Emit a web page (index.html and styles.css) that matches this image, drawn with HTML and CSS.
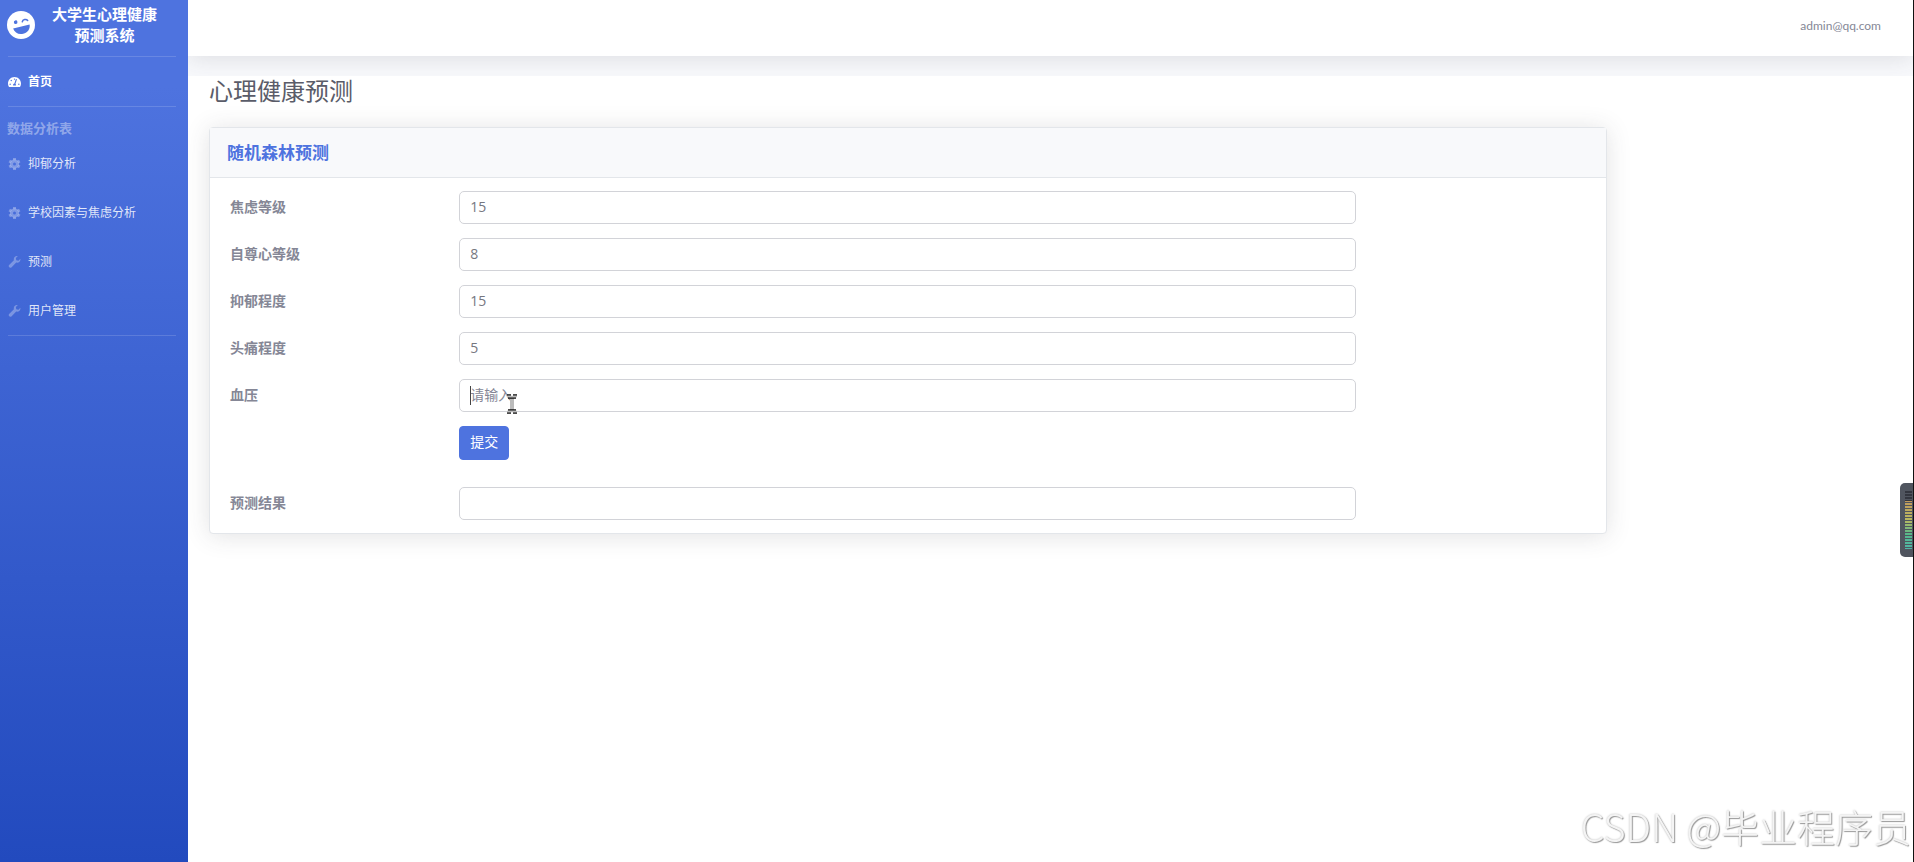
FILE: index.html
```
<!DOCTYPE html>
<html lang="zh-CN">
<head>
    <meta charset="UTF-8">
    <meta name="viewport" content="width=device-width, initial-scale=1.0">
    <title>大学生心理健康预测系统</title>
    <link rel="stylesheet" href="styles.css">
</head>
<body>
    <div class="wrapper">
        <!-- Sidebar -->
        <nav class="sidebar">
            <a class="brand" href="#">
                <svg class="brand-icon" viewBox="0 0 28 28" aria-hidden="true">
                    <circle cx="14" cy="14" r="14" fill="#fff"/>
                    <g transform="rotate(-14 14 14)">
                        <path d="M5.500 15.500h17c-.4 4.500-3.800 7.500-8.500 7.500s-8.100-3-8.500-7.500z" fill="#4e73df"/>
                        <circle cx="9.500" cy="10" r="1.800" fill="#4e73df"/>
                        <path d="M16 11.200c1-2.200 4.600-2.200 5.600 0" fill="none" stroke="#4e73df" stroke-width="1.500" stroke-linecap="round"/>
                    </g>
                </svg>
                <span class="brand-text">大学生心理健康<br>预测系统</span>
            </a>
            <hr class="divider">
            <a class="nav-link active" href="#">
                <svg class="nav-icon" viewBox="0 0 576 512" aria-hidden="true">
                    <path fill="currentColor" d="M288 32C128.940 32 0 160.940 0 320c0 52.800 14.250 102.260 39.060 144.800 5.610 9.620 16.300 15.200 27.440 15.200h443c11.140 0 21.830-5.580 27.440-15.200C561.750 422.260 576 372.800 576 320c0-159.060-128.940-288-288-288zm0 64c14.710 0 26.580 10.130 30.320 23.650-1.110 2.260-2.640 4.230-3.450 6.670l-9.220 27.670c-5.130 3.490-10.970 6.010-17.640 6.010-17.670 0-32-14.330-32-32S270.330 96 288 96zM96 384c-17.670 0-32-14.330-32-32s14.330-32 32-32 32 14.330 32 32-14.330 32-32 32zm48-160c-17.670 0-32-14.330-32-32s14.330-32 32-32 32 14.330 32 32-14.330 32-32 32zm246.770-72.410l-61.330 184C343.130 347.330 352 364.540 352 384c0 11.720-3.380 22.550-8.880 32H232.880c-5.500-9.450-8.880-20.280-8.880-32 0-33.940 26.500-61.430 59.900-63.590l61.340-184.010c4.170-12.560 17.730-19.450 30.360-15.170 12.570 4.190 19.350 17.790 15.170 30.360zM480 384c-17.670 0-32-14.330-32-32s14.330-32 32-32 32 14.330 32 32-14.330 32-32 32z"/>
                </svg>
                <span>首页</span>
            </a>
            <hr class="divider">
            <div class="nav-heading">数据分析表</div>
            <a class="nav-link" href="#">
                <svg class="nav-icon" viewBox="0 0 16 16" aria-hidden="true">
                    <circle cx="8" cy="8" r="4" fill="none" stroke="currentColor" stroke-width="4"/>
                    <path d="M8 0v3M8 13v3M1 4l2.600 1.500M12.400 10.500L15 12M1 12l2.600-1.500M12.400 5.500L15 4" stroke="currentColor" stroke-width="4"/>
                </svg>
                <span>抑郁分析</span>
            </a>
            <a class="nav-link" href="#">
                <svg class="nav-icon" viewBox="0 0 16 16" aria-hidden="true">
                    <circle cx="8" cy="8" r="4" fill="none" stroke="currentColor" stroke-width="4"/>
                    <path d="M8 0v3M8 13v3M1 4l2.600 1.500M12.400 10.500L15 12M1 12l2.600-1.500M12.400 5.500L15 4" stroke="currentColor" stroke-width="4"/>
                </svg>
                <span>学校因素与焦虑分析</span>
            </a>
            <a class="nav-link" href="#">
                <svg class="nav-icon" viewBox="0 0 16 16" aria-hidden="true">
                    <path fill="currentColor" d="M15.800 3.700l-2.500 2.500-2.900-.6-.6-2.900L12.300.2C9 -.6 6.300 2.400 7.200 5.700L.8 12.100c-1.800 2 1.100 4.900 3.100 3.100l6.400-6.400c3.300.9 6.300-1.800 5.500-5.100z"/>
                </svg>
                <span>预测</span>
            </a>
            <a class="nav-link" href="#">
                <svg class="nav-icon" viewBox="0 0 16 16" aria-hidden="true">
                    <path fill="currentColor" d="M15.800 3.700l-2.500 2.500-2.900-.6-.6-2.900L12.300.2C9 -.6 6.300 2.400 7.200 5.700L.8 12.100c-1.800 2 1.100 4.900 3.100 3.100l6.400-6.400c3.300.9 6.300-1.800 5.500-5.100z"/>
                </svg>
                <span>用户管理</span>
            </a>
            <hr class="divider">
        </nav>

        <div class="content">
            <!-- Topbar -->
            <header class="topbar">
                <a class="user" href="#">admin@qq.com</a>
            </header>

            <main class="main">
                <h1>心理健康预测</h1>
                <div class="card">
                    <div class="card-header">
                        <h2>随机森林预测</h2>
                    </div>
                    <form class="card-body">
                        <div class="form-row">
                            <label for="anxiety">焦虑等级</label>
                            <div class="field"><input type="text" id="anxiety" value="15" placeholder="请输入"></div>
                        </div>
                        <div class="form-row">
                            <label for="esteem">自尊心等级</label>
                            <div class="field"><input type="text" id="esteem" value="8" placeholder="请输入"></div>
                        </div>
                        <div class="form-row">
                            <label for="depression">抑郁程度</label>
                            <div class="field"><input type="text" id="depression" value="15" placeholder="请输入"></div>
                        </div>
                        <div class="form-row">
                            <label for="headache">头痛程度</label>
                            <div class="field"><input type="text" id="headache" value="5" placeholder="请输入"></div>
                        </div>
                        <div class="form-row">
                            <label for="pressure">血压</label>
                            <div class="field">
                                <input type="text" id="pressure" placeholder="请输入">
                                <span class="caret"></span>
                                <svg class="pointer" viewBox="0 0 12 20" aria-hidden="true">
                                    <path d="M4 4h4v12H4z" fill="#bbb"/>
                                    <path d="M1 1h4M7 1h4M2 4h8M2 16h8M1 19h4M7 19h4" stroke="#111" stroke-width="1.500"/>
                                    <path d="M1 2.500h10M1 17.500h10" stroke="#bbb" stroke-width="1.500"/>
                                </svg>
                            </div>
                        </div>
                        <div class="form-row submit-row">
                            <div class="field"><button type="submit">提交</button></div>
                        </div>
                        <div class="form-row">
                            <label for="result">预测结果</label>
                            <div class="field"><input type="text" id="result"></div>
                        </div>
                    </form>
                </div>
            </main>
        </div>
    </div>

    <!-- Floating level meter -->
    <div class="meter"><div class="meter-bars"></div></div>

    <div class="watermark">CSDN @毕业程序员</div>
</body>
</html>
```
FILE: styles.css
```
* {
    box-sizing: border-box;
}

body {
    margin: 0;
    font-family: "Open Sans", "Noto Sans CJK SC", sans-serif;
    font-size: 14px;
    line-height: 21px;
    color: #858796;
    background-color: #fff;
}

a {
    text-decoration: none;
}

.wrapper {
    display: flex;
    min-height: 100vh;
    border-right: 1px solid #111;
}

/* Sidebar */
.sidebar {
    flex: 0 0 188px;
    background: linear-gradient(180deg, #4e73df 10%, #224abe 100%);
}

.brand {
    display: flex;
    align-items: center;
    height: 56px;
    padding: 0 7px 6px;
    color: #fff;
    font-size: 15px;
    font-weight: 700;
}

.brand-icon {
    width: 28px;
    height: 28px;
}

.brand-text {
    flex: 1;
    padding-right: 12px;
    padding-left: 5px;
    text-align: center;
}

.divider {
    height: 1px;
    margin: 0 12px 0 8px;
    border: 0;
    background-color: rgba(255, 255, 255, 0.15);
}

.nav-link {
    display: flex;
    align-items: center;
    gap: 7px;
    height: 49px;
    padding: 0 8px;
    color: rgba(255, 255, 255, 0.85);
    font-size: 12px;
}

.nav-icon {
    width: 13px;
    height: 12px;
    color: rgba(255, 255, 255, 0.3);
}

.nav-link.active {
    color: #fff;
    font-weight: 700;
}

.nav-link.active .nav-icon {
    color: #fff;
}

.nav-heading {
    padding: 11px 7px 0;
    color: rgba(255, 255, 255, 0.4);
    font-size: 13px;
    font-weight: 700;
}

/* Content */
.content {
    flex: 1;
    display: flex;
    flex-direction: column;
    min-width: 0;
    overflow: hidden;
    background-color: #f8f9fc;
}

.topbar {
    display: flex;
    justify-content: flex-end;
    height: 56px;
    margin-bottom: 20px;
    padding: 15px 32px;
    background-color: #fff;
    box-shadow: 0 2px 24px rgba(58, 59, 69, 0.15);
}

.user {
    color: #858796;
    font-family: Lato, sans-serif;
    font-size: 12px;
}

.main {
    position: relative;
    flex: 1;
    padding: 0 20px 21px 21px;
    background-color: #fff;
}

h1 {
    margin: 0 0 22px;
    color: #5a5c69;
    font-size: 24px;
    font-weight: 400;
    line-height: 29px;
}

.card {
    width: 83%;
    border: 1px solid #e3e6ea;
    border-radius: 4px;
    background-color: #fff;
    box-shadow: 0 2px 24px rgba(58, 59, 69, 0.15);
}

.card-header {
    padding: 14px 17px;
    border-bottom: 1px solid #e3e6ea;
    background-color: #f8f9fb;
}

h2 {
    margin: 0;
    color: #4e73df;
    font-size: 17px;
    font-weight: 700;
    line-height: 21px;
}

.card-body {
    padding: 13px 10px;
}

.form-row {
    display: flex;
    margin-bottom: 14px;
}

.form-row:last-child {
    margin-bottom: 0;
}

label {
    flex: 0 0 16.6667%;
    padding: 5px 10px;
    font-weight: 700;
}

.field {
    position: relative;
    flex: 0 0 66.6667%;
    padding: 0 10px;
}

input {
    display: block;
    width: 100%;
    height: 33px;
    padding: 4px 10px 6px;
    border: 1px solid #d2d3d8;
    border-radius: 5px;
    color: #76777f;
    background-color: #fff;
    font: inherit;
}

input::placeholder {
    color: #858796;
}

.submit-row {
    margin-bottom: 27px;
    padding-left: 16.6667%;
}

button {
    display: block;
    height: 34px;
    padding: 0 10px 3px;
    border: 1px solid #4e73df;
    border-radius: 4px;
    color: #fff;
    background-color: #4e73df;
    font: inherit;
}

.caret {
    position: absolute;
    top: 7px;
    left: 21px;
    width: 1px;
    height: 19px;
    background-color: #444;
}

.pointer {
    position: absolute;
    top: 15px;
    left: 57px;
    width: 12px;
    height: 20px;
}

/* Overlays */
.meter {
    position: fixed;
    top: 483px;
    right: 1px;
    width: 13px;
    height: 74px;
    padding: 8px 1px 8px 5px;
    border-radius: 5px 0 0 5px;
    background-color: #50555f;
}

.meter-bars {
    height: 100%;
    background:
        repeating-linear-gradient(180deg, transparent 0 2px, #50555f 2px 3px),
        linear-gradient(180deg, #33363f 0 17%, #c09a5c 18%, #b9b860 50%, #55b78b 75%, #4fb5a8 100%);
}

.watermark {
    position: fixed;
    right: 3px;
    bottom: 8px;
    color: #f4f4f4;
    font-family: "Noto Sans CJK SC", sans-serif;
    font-size: 38px;
    font-weight: 300;
    line-height: 56px;
    text-shadow: 1px 1px 1px #999, 0 0 2px #bbb;
}
```
